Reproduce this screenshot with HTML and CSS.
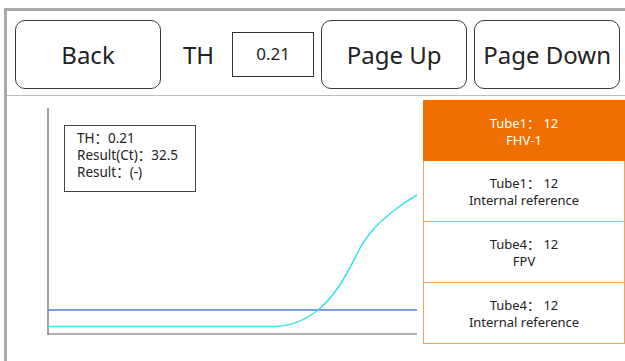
FILE: index.html
```html
<!DOCTYPE html>
<html>
<head>
<meta charset="utf-8">
<link rel="stylesheet" href="styles.css">
</head>
<body>
<div class="frame">
  <div class="toolbar">
    <button class="btn btn-back">Back</button>
    <span class="th-label">TH</span>
    <div class="th-input">0.21</div>
    <button class="btn btn-page">Page Up</button>
    <button class="btn btn-page">Page Down</button>
  </div>
  <div class="content">
    <div class="chart">
      <svg class="chart-svg" width="416" height="262" viewBox="7 96 416 262">
        <line x1="48" y1="108" x2="48" y2="334.5" stroke="#666" stroke-width="1.2"/>
        <line x1="47.5" y1="334" x2="417" y2="334" stroke="#666" stroke-width="1.2"/>
        <line x1="48" y1="310" x2="417" y2="310" stroke="#4f7fd8" stroke-width="1.6"/>
        <path d="M48,326.5 H275 C295,326 308,318 318,310 C335,296 345,278 358,252 C368,232 380,222 392,212 C402,204 410,199 417,195" fill="none" stroke="#3fe2ea" stroke-width="1.6"/>
      </svg>
      <div class="legend">
        <div>TH：0.21</div>
        <div>Result(Ct)：32.5</div>
        <div>Result：(-)</div>
      </div>
    </div>
    <div class="tubes">
      <div class="tube active"><div>Tube1：&nbsp;12</div><div>FHV-1</div></div>
      <div class="tube"><div>Tube1：&nbsp;12</div><div>Internal reference</div></div>
      <div class="tube"><div>Tube4：&nbsp;12</div><div>FPV</div></div>
      <div class="tube"><div>Tube4：&nbsp;12</div><div>Internal reference</div></div>
    </div>
  </div>
</div>
</body>
</html>
```
FILE: styles.css
```css
html, body {
  margin: 0;
  padding: 0;
  background: #fff;
  width: 625px;
  height: 361px;
  overflow: hidden;
  font-family: "Noto Sans", "Noto Sans CJK SC", sans-serif;
  color: #222;
}
.frame {
  margin: 8px 0 0 4px;
  border-top: 3px solid #a9a9a9;
  border-left: 3px solid #a9a9a9;
  height: 353px;
  box-sizing: border-box;
}
.toolbar {
  display: flex;
  align-items: flex-start;
  height: 85px;
  box-sizing: border-box;
  padding: 9px 0 0 8px;
  border-bottom: 1.5px solid #bdbdbd;
}
.btn {
  font-family: inherit;
  background: #fff;
  border: 1.5px solid #3a3a3a;
  border-radius: 10px;
  height: 69px;
  box-sizing: border-box;
  font-size: 24px;
  color: #222;
  padding: 0;
}
.btn-back {
  width: 146px;
}
.th-label {
  font-size: 24px;
  margin-left: 22px;
  line-height: 69px;
}
.th-input {
  margin: 12px 0 0 18px;
  width: 82px;
  height: 45px;
  box-sizing: border-box;
  border: 1.5px solid #333;
  font-size: 17px;
  line-height: 42px;
  text-align: center;
}
.btn-page {
  width: 146px;
  margin-left: 7px;
}
.content {
  display: flex;
}
.chart {
  position: relative;
  width: 416px;
}
.chart-svg {
  display: block;
}
.legend {
  position: absolute;
  left: 57px;
  top: 29px;
  width: 132px;
  height: 67px;
  box-sizing: border-box;
  border: 1.2px solid #444;
  padding: 4px 0 0 12px;
  font-size: 13.5px;
  line-height: 17px;
  color: #222;
  white-space: nowrap;
}
.tubes {
  margin-top: 3.5px;
  width: 203px;
  display: flex;
  flex-direction: column;
}
.tube {
  height: 61px;
  box-sizing: border-box;
  border: 1.5px solid #f0a45a;
  border-top: none;
  padding-top: 3px;
  display: flex;
  flex-direction: column;
  justify-content: center;
  align-items: center;
  font-size: 13px;
  line-height: 17px;
  color: #222;
}
.tube:first-child {
  border-top: 1.5px solid #f0a45a;
}
.tube.active {
  background: #ef7000;
  border-color: #ef7000;
  color: #fff;
}
```
